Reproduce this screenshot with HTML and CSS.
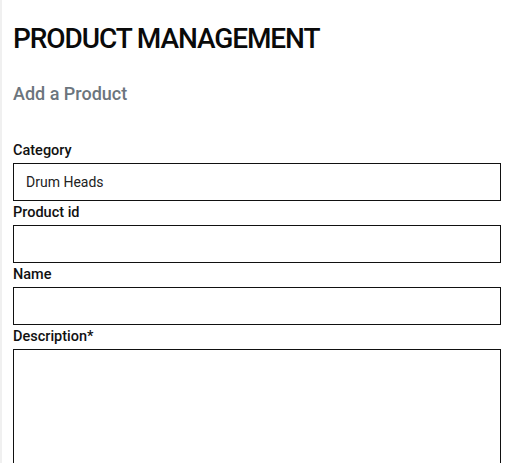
FILE: index.html
```html
<!DOCTYPE html>
<html lang="en">
<head>
<meta charset="utf-8">
<title>Product Management</title>
<link rel="stylesheet" href="styles.css">
</head>
<body>
<div class="page">
  <h1 class="title">PRODUCT MANAGEMENT</h1>
  <h2 class="subtitle">Add a Product</h2>
  <form class="form">
    <label class="label" for="category">Category</label>
    <div class="input select" id="category">Drum Heads</div>
    <label class="label" for="pid">Product id</label>
    <input class="input" id="pid" type="text">
    <label class="label" for="name">Name</label>
    <input class="input" id="name" type="text">
    <label class="label" for="desc">Description*</label>
    <textarea class="input textarea" id="desc"></textarea>
  </form>
</div>
</body>
</html>
```
FILE: styles.css
```css
html, body {
  margin: 0;
  padding: 0;
  background: #ffffff;
  overflow: hidden;
}
body {
  font-family: Roboto, "Liberation Sans", sans-serif;
  color: #111;
}
.page {
  border-left: 2px solid #f0f0f0;
  padding: 0 12px 0 11px;
  height: 463px;
  box-sizing: border-box;
}
.title {
  margin: 0;
  padding-top: 22px;
  font-size: 28px;
  line-height: 34px;
  font-weight: 500;
  letter-spacing: -1.1px;
  color: #0a0a0a;
}
.subtitle {
  margin: 0;
  padding-top: 25px;
  font-size: 18px;
  line-height: 26px;
  font-weight: 500;
  color: #6c757d;
}
.form {
  display: flex;
  flex-direction: column;
  padding-top: 32px;
}
.label {
  font-size: 14.5px;
  font-weight: 500;
  line-height: 18px;
  height: 18px;
  padding-top: 3px;
  padding-bottom: 3px;
  color: #111;
}
.input {
  box-sizing: border-box;
  height: 38px;
  width: 100%;
  border: 1px solid #111;
  border-radius: 0;
  margin: 0;
  padding: 0 12px;
  font-family: inherit;
  font-size: 14px;
  background: #fff;
  outline: none;
}
.select {
  display: flex;
  align-items: center;
  color: #222;
}
.textarea {
  height: 140px;
  resize: none;
}
```
